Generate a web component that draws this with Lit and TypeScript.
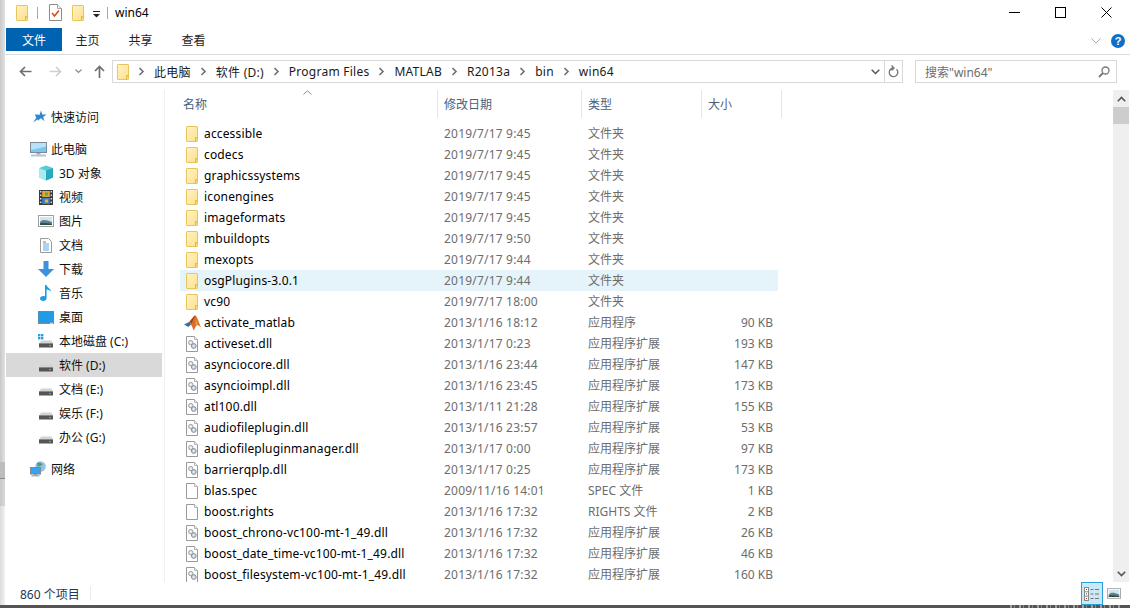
import { LitElement, html, css, svg } from "lit";
import { customElement } from "lit/decorators.js";

const folderIcon = () => html`<svg width="14" height="18" viewBox="0 0 14 18">
  <defs><linearGradient id="fg" x1="0" y1="0" x2="1" y2="1"><stop offset="0" stop-color="#fff3c4"/><stop offset="1" stop-color="#fde08c"/></linearGradient></defs>
  <rect x="1.5" y="1.5" width="11" height="15" rx="0.6" fill="url(#fg)" stroke="#eac458"/>
  <path d="M10.5 16.5v-4h2" fill="#f3d576" stroke="#e2b93f"/>
</svg>`;

const dllIcon = () => html`<svg width="14" height="18" viewBox="0 0 14 18">
  <path d="M1.5 1.5h8l3 3v12h-11z" fill="#fff" stroke="#9a9a9a"/>
  <path d="M9.5 1.5v3h3" fill="#eee" stroke="#b5b5b5"/>
  <circle cx="5.8" cy="7.6" r="2.2" fill="#dfe3e7" stroke="#98a2ab"/>
  <circle cx="8.8" cy="11" r="2.4" fill="#ccd2d9" stroke="#87919b"/>
  <circle cx="8.8" cy="11" r="0.8" fill="#fff"/>
  <circle cx="5.8" cy="7.6" r="0.7" fill="#fff"/>
</svg>`;

const plainIcon = () => html`<svg width="14" height="18" viewBox="0 0 14 18">
  <path d="M1.5 1.5h8l3 3v12h-11z" fill="#fff" stroke="#9a9a9a"/>
  <path d="M9.5 1.5v3h3" fill="#f4f4f4" stroke="#b5b5b5"/>
</svg>`;

const matlabIcon = () => html`<svg width="17" height="16" viewBox="0 0 17 16">
  <path d="M0 9.500l5.500-2.800 2.400 1.800-3.400 3.600z" fill="#3f6f9c"/>
  <path d="M5.500 6.700l3.100-3.600C9.600 1.800 10.300.5 11.200.5c1.500 0 3 5.300 5.800 11.800-1.600-1.200-2.600-2.400-3.600-2.400-1.300 0-2.300 3.200-3.800 5.600-.9-3-2-5.600-3.700-7.300z" fill="#dd6c2a"/>
  <path d="M8.600 3.100C9.600 1.800 10.300.5 11.200.5c-1 1.400-2.200 5-3.400 7.800L5.500 6.700z" fill="#8f4320"/>
  <path d="M11.500 3c.9 2 1.700 4.200 2.500 6.400-.8-.3-1.600-.2-2.400.8.300-2.500.300-4.900-.1-7.200z" fill="#efa23a"/>
</svg>`;

const driveIcon = (win = false) => html`<svg width="16" height="14" viewBox="0 0 16 14">
  ${win ? svg`<g fill="#1fa3e8"><rect x="0" y="0" width="2.400" height="2.400"/><rect x="3" y="0" width="2.400" height="2.400"/><rect x="0" y="3" width="2.400" height="2.400"/><rect x="3" y="3" width="2.400" height="2.400"/></g>` : ""}
  <path d="M3 6.500h10.400l1.600 3H1.500z" fill="#d3d3d3"/>
  <rect x="1" y="9" width="14" height="4.500" fill="#555"/>
  <rect x="1" y="9" width="14" height="1" fill="#8a8a8a"/>
  <rect x="11" y="11" width="2" height="1" fill="#41d05a"/>
</svg>`;

const pcIcon = () => html`<svg width="17" height="15" viewBox="0 0 17 15">
  <rect x="0.500" y="0.500" width="16" height="10" fill="#7ec6f1" stroke="#7a8a96"/>
  <path d="M1 1h15v3.500L1 8z" fill="#b7e2f8"/>
  <rect x="6.500" y="11" width="4" height="1.500" fill="#9fa7ad"/>
  <rect x="1" y="12.500" width="15" height="2" fill="#b9c4cc"/>
</svg>`;

const netIcon = () => html`<svg width="17" height="16" viewBox="0 0 17 16">
  <circle cx="10.500" cy="5.500" r="5.200" fill="#8ec4e8"/>
  <path d="M7 2c3-1 5 0 5.500 2-2 .5-3 2-5 1.500z" fill="#5a9c6c"/>
  <rect x="0.500" y="6.500" width="10" height="6.500" fill="#36a3ee" stroke="#7a8a96"/>
  <rect x="4" y="13" width="3" height="1" fill="#8c969d"/>
  <rect x="1.500" y="14" width="8" height="1.500" fill="#a7b3bc"/>
</svg>`;

const starIcon = () => html`<svg width="15" height="14" viewBox="0 0 15 14">
  <path d="M9 .5l1.300 4 4.200.1-3.300 2.500 1.200 4.100L9 8.300l-3.400 2.400.3-1.500L1 12.500l3.300-4.700L2.800 4.600l4.900.1z" fill="#2f86d6"/>
</svg>`;

const cubeIcon = () => html`<svg width="16" height="16" viewBox="0 0 16 16">
  <path d="M8 .5l7 2.500v9.500L8 15.500 1 12.500V3z" fill="#58cbd9"/>
  <path d="M1 3l7 2.700V15.500L1 12.500z" fill="#a9ecef"/>
  <path d="M8 5.700L15 3v9.500l-7 3z" fill="#27a9c2"/>
</svg>`;

const videoIcon = () => html`<svg width="14" height="15" viewBox="0 0 14 15">
  <rect x="0" y="0" width="14" height="15" fill="#3b3b3b"/>
  <g fill="#ddd"><rect x="1" y="1" width="1.400" height="1.500"/><rect x="1" y="4.500" width="1.400" height="1.500"/><rect x="1" y="8" width="1.400" height="1.500"/><rect x="1" y="11.500" width="1.400" height="1.500"/>
  <rect x="11.600" y="1" width="1.400" height="1.500"/><rect x="11.600" y="4.500" width="1.400" height="1.500"/><rect x="11.600" y="8" width="1.400" height="1.500"/><rect x="11.600" y="11.500" width="1.400" height="1.500"/></g>
  <rect x="3.200" y="1" width="7.600" height="6" fill="#d9a93a"/><rect x="3.200" y="8" width="7.600" height="6" fill="#3f7fc2"/>
  <rect x="6" y="2.500" width="3" height="3" fill="#6fa23c"/><rect x="6" y="9.500" width="3" height="3" fill="#e0b93e"/>
</svg>`;

const pictureIcon = (w = 16, h = 12) => html`<svg width=${w} height=${h} viewBox="0 0 16 12">
  <rect x="0.500" y="0.500" width="15" height="11" fill="#fff" stroke="#a0a0a0"/>
  <rect x="2" y="2" width="12" height="8" fill="#cfe6f2"/>
  <path d="M2 7c3-3 6-2 12 0v3H2z" fill="#63818c"/>
  <path d="M2 8.500c4-1 8 0 12 .5v1H2z" fill="#2f4e3d"/>
</svg>`;

const docIcon = () => html`<svg width="12" height="15" viewBox="0 0 12 15">
  <path d="M.5.5h8l3 3v11H.5z" fill="#fff" stroke="#9a9a9a"/>
  <g stroke="#5fa5dc"><path d="M3 6h6M3 8h6M3 10h6M3 12h6"/></g><path d="M3 4h3" stroke="#7a7a7a"/>
</svg>`;

const downIcon = () => html`<svg width="16" height="16" viewBox="0 0 16 16"><path d="M5.500 0h5v8H16l-8 8-8-8h5.500z" fill="#3d92dd"/></svg>`;
const noteIcon = () => html`<svg width="12" height="16" viewBox="0 0 12 16"><path d="M5 0h1.600c.4 3 4.400 3.500 4.400 7-.9-1.500-2.500-2.300-4.400-2.500V13c0 1.700-1.500 3-3.300 3S0 15 0 13.600s1.500-2.600 3.300-2.600c.7 0 1.300.2 1.700.4z" fill="#1f9be8"/></svg>`;
const desktopIcon = () => html`<svg width="16" height="13" viewBox="0 0 16 13"><rect x="0" y="0" width="16" height="13" fill="#7a8a96"/><rect x="0.600" y="0.600" width="14.800" height="11" fill="#1f9be8"/><rect x="12" y="11.800" width="3" height="1" fill="#e8e8e8"/></svg>`;

const chev = () => html`<svg class="crumb-sep" width="7" height="9" viewBox="0 0 7 9"><path d="M1.500 1l3.500 3.500L1.500 8" fill="none" stroke="#6f6f6f" stroke-width="1.600"/></svg>`;

type Kind = "folder" | "dll" | "app" | "plain";
interface Row { n: string; d: string; t: string; s?: string; k: Kind; hl?: boolean }
const F = "文件夹", D = "应用程序扩展";
const rows: Row[] = [
  { n: "accessible", d: "2019/7/17 9:45", t: F, k: "folder" },
  { n: "codecs", d: "2019/7/17 9:45", t: F, k: "folder" },
  { n: "graphicssystems", d: "2019/7/17 9:45", t: F, k: "folder" },
  { n: "iconengines", d: "2019/7/17 9:45", t: F, k: "folder" },
  { n: "imageformats", d: "2019/7/17 9:45", t: F, k: "folder" },
  { n: "mbuildopts", d: "2019/7/17 9:50", t: F, k: "folder" },
  { n: "mexopts", d: "2019/7/17 9:44", t: F, k: "folder" },
  { n: "osgPlugins-3.0.1", d: "2019/7/17 9:44", t: F, k: "folder", hl: true },
  { n: "vc90", d: "2019/7/17 18:00", t: F, k: "folder" },
  { n: "activate_matlab", d: "2013/1/16 18:12", t: "应用程序", s: "90 KB", k: "app" },
  { n: "activeset.dll", d: "2013/1/17 0:23", t: D, s: "193 KB", k: "dll" },
  { n: "asynciocore.dll", d: "2013/1/16 23:44", t: D, s: "147 KB", k: "dll" },
  { n: "asyncioimpl.dll", d: "2013/1/16 23:45", t: D, s: "173 KB", k: "dll" },
  { n: "atl100.dll", d: "2013/1/11 21:28", t: D, s: "155 KB", k: "dll" },
  { n: "audiofileplugin.dll", d: "2013/1/16 23:57", t: D, s: "53 KB", k: "dll" },
  { n: "audiofilepluginmanager.dll", d: "2013/1/17 0:00", t: D, s: "97 KB", k: "dll" },
  { n: "barrierqplp.dll", d: "2013/1/17 0:25", t: D, s: "173 KB", k: "dll" },
  { n: "blas.spec", d: "2009/11/16 14:01", t: "SPEC 文件", s: "1 KB", k: "plain" },
  { n: "boost.rights", d: "2013/1/16 17:32", t: "RIGHTS 文件", s: "2 KB", k: "plain" },
  { n: "boost_chrono-vc100-mt-1_49.dll", d: "2013/1/16 17:32", t: D, s: "26 KB", k: "dll" },
  { n: "boost_date_time-vc100-mt-1_49.dll", d: "2013/1/16 17:32", t: D, s: "46 KB", k: "dll" },
  { n: "boost_filesystem-vc100-mt-1_49.dll", d: "2013/1/16 17:32", t: D, s: "160 KB", k: "dll" },
];

const kindIcon = (k: Kind) =>
  k === "folder" ? folderIcon() : k === "dll" ? dllIcon() : k === "app" ? matlabIcon() : plainIcon();

const navTree = [
  { label: "此电脑", icon: pcIcon(), lvl: 1 },
  { label: "3D 对象", icon: cubeIcon(), lvl: 2 },
  { label: "视频", icon: videoIcon(), lvl: 2 },
  { label: "图片", icon: pictureIcon(), lvl: 2 },
  { label: "文档", icon: docIcon(), lvl: 2 },
  { label: "下载", icon: downIcon(), lvl: 2 },
  { label: "音乐", icon: noteIcon(), lvl: 2 },
  { label: "桌面", icon: desktopIcon(), lvl: 2 },
  { label: "本地磁盘 (C:)", icon: driveIcon(true), lvl: 2 },
  { label: "软件 (D:)", icon: driveIcon(), lvl: 2, sel: true },
  { label: "文档 (E:)", icon: driveIcon(), lvl: 2 },
  { label: "娱乐 (F:)", icon: driveIcon(), lvl: 2 },
  { label: "办公 (G:)", icon: driveIcon(), lvl: 2 },
];

const crumbs = ["此电脑", "软件 (D:)", "Program Files", "MATLAB", "R2013a", "bin", "win64"];

@customElement("app-root")
export class AppRoot extends LitElement {
  static styles = css`
    :host { display: block; width: 1130px; height: 608px; overflow: hidden; background: #fff; font-family: "Noto Sans", "Noto Sans CJK SC", sans-serif; font-size: 12px; color: #000; }
    svg { flex: none; }
    .page { display: flex; flex-direction: column; height: 608px; }
    .shell { display: flex; flex: 1; min-height: 0; }
    .shadow { width: 5px; flex: none; display: flex; flex-direction: column; }
    .sh1 { height: 462px; background: linear-gradient(90deg, #c8c8c8, #e2e2e2); }
    .sh2 { height: 16px; background: #bdbdbd; }
    .sh3 { height: 1px; background: #8a8a8a; }
    .sh4 { height: 27px; background: linear-gradient(90deg, #c8c8c8, #d8d8d8); }
    .sh5 { flex: 1; background: linear-gradient(90deg, #dcdcdc, #f2f2f2); }
    .win { flex: 1; min-width: 0; display: flex; flex-direction: column; background: #fff; }
    .band { height: 3px; background: #555; display: flex; justify-content: flex-end; padding-right: 10px; }
    .noise { width: 110px; background: repeating-linear-gradient(90deg, #a0a0a0 0 2px, #555 2px 4px, #8a8a8a 4px 5px, #555 5px 9px); }

    .title { height: 27px; box-sizing: border-box; padding: 0 0 2px 10px; display: flex; align-items: center; flex: none; }
    .title .sep { width: 1px; height: 12px; background: #a8a8a8; }
    .title .sep1 { margin: 0 11px 0 8px; }
    .title .sep2 { margin-left: 6px; }
    .title .dropbtn { margin: 3px 0 0 7px; }
    .title .spc { width: 9px; }
    .title .win-name { margin-left: 7px; }
    .qa { display: flex; align-items: center; }
    .wc { margin-left: auto; display: flex; align-items: center; margin-right: 1px; }
    .wc span { width: 46px; height: 24px; display: flex; align-items: center; justify-content: center; }

    .tabs { height: 27px; display: flex; align-items: flex-start; border-bottom: 1px solid #dadbdc; padding-left: 1px; box-sizing: content-box; flex: none; }
    .tab-file { width: 56px; height: 23px; margin-top: 1px; margin-right: -1px; background: #0063b1; color: #fff; display: flex; align-items: center; justify-content: center; }
    .tab { width: 53px; height: 23px; margin-top: 1px; display: flex; align-items: center; justify-content: center; color: #222; }
    .tabs-right { margin-left: auto; display: flex; align-items: center; gap: 10px; height: 27px; padding-right: 5px; }

    .addr { height: 33px; display: flex; align-items: center; flex: none; }
    .nav { width: 107px; display: flex; align-items: center; height: 22px; padding-left: 14px; box-sizing: border-box; }
    .nav .fw { margin-left: 17px; } .nav .dn { margin-left: 13px; } .nav .up { margin-left: 12px; }
    .box { height: 23px; border: 1px solid #d9d9d9; box-sizing: border-box; display: flex; align-items: center; }
    .crumbs { width: 791px; }
    .crumbs .fold { margin-left: 3px; display: flex; }
    .crumb-sep { margin: 0 4px; }
    .crumb { color: #1a1a1a; white-space: nowrap; letter-spacing: 0.25px; }
    .crumbs .items { display: flex; align-items: center; gap: 5px; margin-left: 4px; }
    .crumbs .tail { margin-left: auto; display: flex; align-items: center; height: 100%; }
    .crumbs .dd { width: 17px; display: flex; justify-content: center; }
    .crumbs .rf { width: 17px; height: 100%; border-left: 1px solid #d9d9d9; display: flex; align-items: center; justify-content: center; }
    .search { width: 202px; margin-left: 12px; justify-content: space-between; padding: 0 6px 0 9px; color: #6d6d6d; }

    .body { flex: 1; min-height: 0; display: flex; }
    .side { width: 158px; flex: none; border-right: 1px solid #f0f0f0; margin-top: 2px; padding: 15px 0 0 1px; box-sizing: content-box; overflow: hidden; }
    .ni { height: 24px; display: flex; align-items: center; width: 156px; color: #111; white-space: nowrap; box-sizing: border-box; }
    .ni .ic { display: flex; justify-content: center; align-items: center; flex: none; width: 22px; }
    .ni .ic.star { margin-left: 3px; width: 19px; }
    .ni.l1 { padding-left: 21px; }
    .ni.l2 { padding-left: 29px; }
    .ni .lb { margin-left: 2px; }
    .ni.sel { background: #d9d9d9; }
    .gap { height: 8px; }

    .list { flex: 1; min-width: 0; display: flex; flex-direction: column; padding-left: 15px; overflow: hidden; }
    .hdr { height: 35px; display: flex; color: #4c607a; flex: none; position: relative; }
    .hc { height: 28px; margin-top: 2px; display: flex; align-items: center; border-right: 1px solid #e5e5e5; box-sizing: border-box; padding-left: 6px; flex: none; }
    .sort { position: absolute; left: 123px; top: 2px; }
    .c1 { width: 258px; padding-left: 3px; } .c2 { width: 144px; } .c3 { width: 120px; } .c4 { width: 80px; }
    .row { height: 21px; flex: none; display: flex; align-items: center; width: 598px; white-space: nowrap; }
    .row.hl { background: #e5f3fb; }
    .row .n { width: 258px; flex: none; display: flex; align-items: center; color: #000; box-sizing: border-box; padding-left: 5px; letter-spacing: 0.15px; }
    .row .n .ic { width: 14px; margin-right: 5px; flex: none; display: flex; align-items: center; justify-content: center; }
    .row .d { width: 144px; flex: none; padding-left: 6px; box-sizing: border-box; color: #6d6d6d; letter-spacing: 0.2px; }
    .row .t { width: 120px; flex: none; padding-left: 6px; margin-bottom: 2px; box-sizing: border-box; color: #6d6d6d; }
    .row .s { width: 71px; flex: none; text-align: right; color: #6d6d6d; }

    .sb { width: 16px; margin-right: 1px; background: #efefef; display: flex; flex-direction: column; margin-top: 2px; flex: none; }
    .sb .a { height: 17px; display: flex; align-items: center; justify-content: center; flex: none; }
    .sb .th { height: 17px; background: #cdcdcd; flex: none; }
    .sb .sp { flex: 1; }

    .status { height: 23px; display: flex; align-items: center; padding-left: 15px; color: #1f3556; flex: none; }
    .status .cnt { padding-right: 10px; border-right: 1px solid #ececec; height: 15px; display: flex; align-items: center; }
    .status .views { margin-left: auto; display: flex; align-items: center; gap: 4px; padding-right: 9px; height: 23px; }
    .vbtn { width: 22px; height: 23px; box-sizing: border-box; border: 1px solid #26a0da; background: #cbe8f6; display: flex; align-items: center; justify-content: center; }
  `;

  render() {
    return html`<div class="page">
      <div class="shell">
        <div class="shadow"><div class="sh1"></div><div class="sh2"></div><div class="sh3"></div><div class="sh4"></div><div class="sh5"></div></div>
        <div class="win">
          <div class="title">
            <div class="qa">
              ${folderIcon()}
              <span class="sep sep1"></span>
              <svg width="13" height="17" viewBox="0 0 13 17"><path d="M.5.5h8l4 4v12H.5z" fill="#fff" stroke="#8c8c8c"/><path d="M8.500.5v4h4" fill="#eee" stroke="#a8a8a8"/><path d="M3 9l2.500 3L10 6.500" fill="none" stroke="#d9481c" stroke-width="1.500"/></svg>
              <span class="spc"></span>
              ${folderIcon()}
              <svg class="dropbtn" width="9" height="7" viewBox="0 0 9 7"><path d="M1 0h7v1H1z" fill="#222"/><path d="M1 3h7L4.500 6.500z" fill="#222"/></svg>
              <span class="sep sep2"></span>
            </div>
            <span class="win-name">win64</span>
            <div class="wc">
              <span><svg width="11" height="1"><rect width="11" height="1" fill="#000"/></svg></span>
              <span><svg width="11" height="11"><rect x=".5" y=".5" width="10" height="10" fill="none" stroke="#000"/></svg></span>
              <span><svg width="11" height="11"><path d="M.5.5l10 10M10.500.5l-10 10" stroke="#000" fill="none"/></svg></span>
            </div>
          </div>
          <div class="tabs">
            <div class="tab-file">文件</div>
            <div class="tab">主页</div>
            <div class="tab">共享</div>
            <div class="tab">查看</div>
            <div class="tabs-right">
              <svg width="10" height="6" viewBox="0 0 10 6"><path d="M.5.5L5 5 9.500.5" fill="none" stroke="#a6a6a6"/></svg>
              <svg width="14" height="14" viewBox="0 0 14 14"><circle cx="7" cy="7" r="7" fill="#0f6fc6"/><text x="7" y="11" text-anchor="middle" font-size="11" font-weight="700" fill="#fff" font-family="Liberation Sans">?</text></svg>
            </div>
          </div>
          <div class="addr">
            <div class="nav">
              <svg width="13" height="11" viewBox="0 0 13 11"><path d="M12.500 5.500H2M6 1L1.500 5.500 6 10" fill="none" stroke="#6f6f6f" stroke-width="1.700"/></svg>
              <svg class="fw" width="13" height="11" viewBox="0 0 13 11"><path d="M.5 5.500H11M7 1l4.500 4.500L7 10" fill="none" stroke="#cfcfcf" stroke-width="1.700"/></svg>
              <svg class="dn" width="7" height="5" viewBox="0 0 7 5"><path d="M.5.5L3.500 3.500 6.500.5" fill="none" stroke="#8a8a8a" stroke-width="1.200"/></svg>
              <svg class="up" width="11" height="13" viewBox="0 0 11 13"><path d="M5.500 13V2M1 6l4.500-4.500L10 6" fill="none" stroke="#6f6f6f" stroke-width="1.700"/></svg>
            </div>
            <div class="box crumbs">
              <span class="fold">${folderIcon()}</span>
              <div class="items">
                ${crumbs.map((c) => html`${chev()}<span class="crumb">${c}</span>`)}
              </div>
              <div class="tail">
                <span class="dd"><svg width="9" height="6" viewBox="0 0 9 6"><path d="M.7.7L4.500 4.500 8.300.7" fill="none" stroke="#555" stroke-width="1.500"/></svg></span>
                <span class="rf"><svg width="11" height="13" viewBox="0 0 11 13"><path d="M8.500 4.200A4.300 4.300 0 1 1 5.500 3M3.500.5L6 3 3.500 5.500" fill="none" stroke="#777" stroke-width="1.400"/></svg></span>
              </div>
            </div>
            <div class="box search">
              <span>搜索"win64"</span>
              <svg width="12" height="12" viewBox="0 0 12 12"><circle cx="7.500" cy="4.500" r="3.500" fill="none" stroke="#777" stroke-width="1.300"/><path d="M5 7L1 11" stroke="#777" stroke-width="1.800"/></svg>
            </div>
          </div>
          <div class="body">
            <div class="side">
              <div class="ni l1"><span class="ic star">${starIcon()}</span><span class="lb">快速访问</span></div>
              <div class="gap"></div>
              ${navTree.map(
                (n) => html`<div class="ni ${n.lvl === 1 ? "l1" : "l2"} ${n.sel ? "sel" : ""}">
                  <span class="ic">${n.icon}</span><span class="lb">${n.label}</span>
                </div>`
              )}
              <div class="gap"></div>
              <div class="ni l1"><span class="ic">${netIcon()}</span><span class="lb">网络</span></div>
            </div>
            <div class="list">
              <div class="hdr">
                <div class="hc c1">名称</div>
                <div class="hc c2">修改日期</div>
                <div class="hc c3">类型</div>
                <div class="hc c4">大小</div>
                <svg class="sort" width="9" height="5" viewBox="0 0 9 5"><path d="M.5 4.500L4.500.8l4 3.700" fill="none" stroke="#8a8a8a"/></svg>
              </div>
              ${rows.map(
                (r) => html`<div class="row ${r.hl ? "hl" : ""}">
                  <div class="n"><span class="ic">${kindIcon(r.k)}</span><span>${r.n}</span></div>
                  <div class="d">${r.d}</div>
                  <div class="t">${r.t}</div>
                  <div class="s">${r.s ?? ""}</div>
                </div>`
              )}
            </div>
            <div class="sb">
              <div class="a"><svg width="9" height="6" viewBox="0 0 9 6"><path d="M.8 5.200L4.500 1.500l3.700 3.700" fill="none" stroke="#555" stroke-width="1.600"/></svg></div>
              <div class="th"></div>
              <div class="sp"></div>
              <div class="a"><svg width="9" height="6" viewBox="0 0 9 6"><path d="M.8.800L4.500 4.500 8.200.8" fill="none" stroke="#555" stroke-width="1.600"/></svg></div>
            </div>
          </div>
          <div class="status">
            <span class="cnt">860 个项目</span>
            <div class="views">
              <div class="vbtn"><svg width="16" height="14" viewBox="0 0 16 14"><rect x=".5" y=".5" width="4" height="13" fill="#fff" stroke="#8a8a8a"/><path d="M.5 4.800h4M.5 9.200h4" stroke="#8a8a8a"/><g fill="#555"><rect x="2" y="2" width="1" height="1"/><rect x="2" y="6.500" width="1" height="1"/></g><rect x="2" y="11" width="1" height="1" fill="#a33"/><path d="M6.500 2.500h3M11 2.500h4M6.500 7h3M11 7h4M6.500 11.500h3M11 11.500h4" stroke="#777"/></svg></div>
              ${pictureIcon(14, 11)}
            </div>
          </div>
        </div>
      </div>
      <div class="band"><div class="noise"></div></div>
    </div>`;
  }
}
